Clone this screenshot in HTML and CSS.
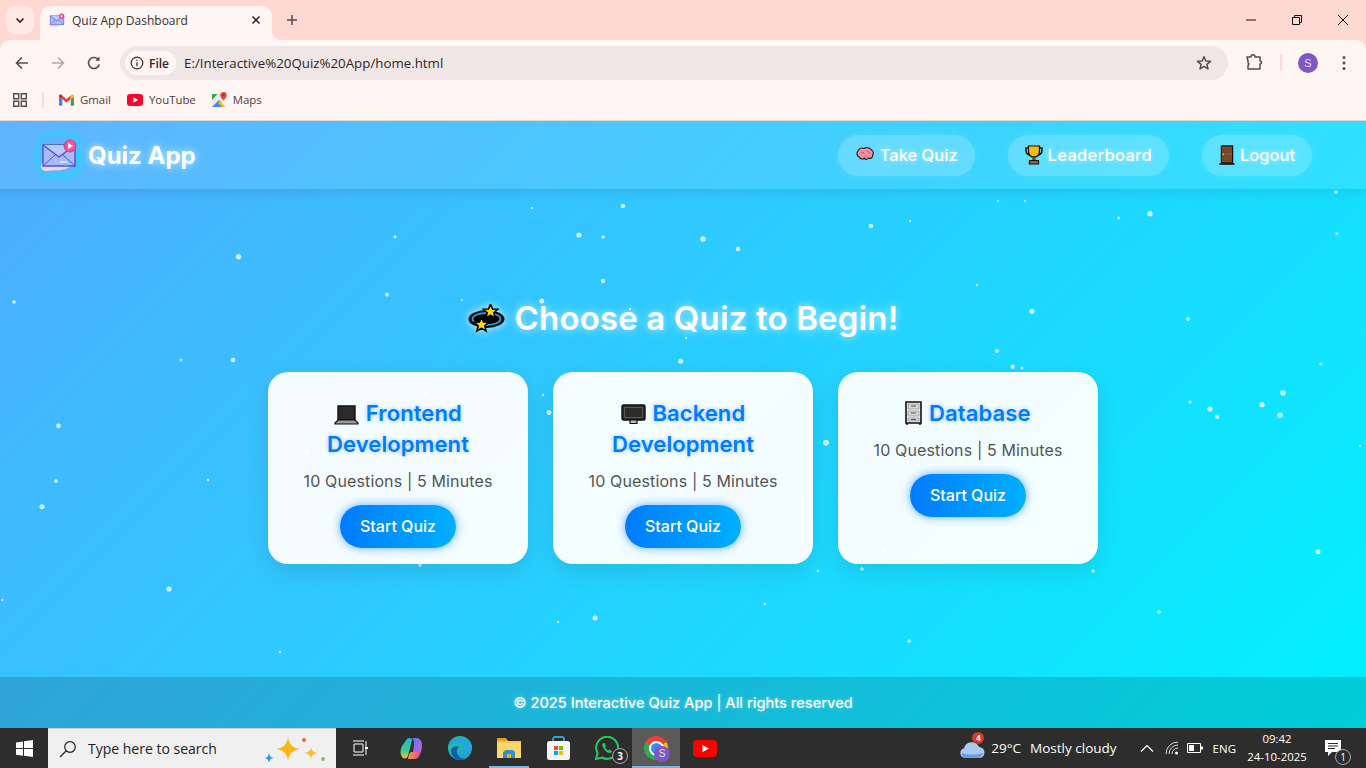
FILE: index.html
```html
<!DOCTYPE html>
<html>
<head>
<meta charset="utf-8">
<title>Quiz App Dashboard</title>
<link rel="stylesheet" href="styles.css">
</head>
<body>

<svg class="defs" width="0" height="0">
  <symbol id="mail" viewBox="0 0 38 38">
    <path d="M2 27c-3 4 0 9 6 8 4-1 9 0 13-1 7-1 12-4 13-9 1-4 0-8-2-8z" fill="#f1d3e6"/>
    <path d="M3 9h32v21H3z" fill="#a8b9ff" stroke="#4a55c8" stroke-width="1.4" stroke-linejoin="round"/>
    <path d="M3 9l16 12L35 9" fill="#bcc9ff" stroke="#4a55c8" stroke-width="1.4" stroke-linejoin="round"/>
    <path d="M3 30l12-11M35 30L23 19" fill="none" stroke="#4a55c8" stroke-width="1"/>
    <path d="M20 26h7" stroke="#fff" stroke-width="1.2"/>
    <circle cx="30" cy="10" r="6" fill="#f2559b" stroke="#c93a80" stroke-width="1"/>
    <path d="M28 7l5 3-5 3z" fill="#fff"/>
    <circle cx="26" cy="29" r="1.3" fill="#2fd6a0"/>
    <circle cx="16" cy="35" r="1" fill="#2fd6a0"/>
    <circle cx="21" cy="5" r="1" fill="#b58ad8"/>
  </symbol>
  <symbol id="star" viewBox="-7 -7 14 14">
    <polygon points="0,-6 1.7,-2 6,-1.8 2.7,1 3.8,5.4 0,3 -3.8,5.4 -2.7,1 -6,-1.8 -1.7,-2" fill="#ffdd00" stroke="#000" stroke-width="1.3"/>
  </symbol>
</svg>

<div class="tabstrip">
  <div class="tab-search">
    <svg width="12" height="12" viewBox="0 0 12 12"><path d="M2.5 4.500L6 8l3.500-3.500" fill="none" stroke="#222" stroke-width="1.6"/></svg>
  </div>
  <div class="tab">
    <svg class="tab-favicon" width="16" height="16"><use href="#mail"/></svg>
    <span class="tab-title">Quiz App Dashboard</span>
    <svg class="tab-close" width="10" height="10" viewBox="0 0 10 10"><path d="M1.5 1.500l7 7M8.500 1.500l-7 7" stroke="#222" stroke-width="1.5"/></svg>
  </div>
  <div class="new-tab">
    <svg width="12" height="12" viewBox="0 0 12 12"><path d="M6 1v10M1 6h10" stroke="#5b4a47" stroke-width="1.5"/></svg>
  </div>
  <div class="window-controls">
    <div class="win-btn"><svg width="10" height="10" viewBox="0 0 10 10"><path d="M0 5h10" stroke="#111" stroke-width="1"/></svg></div>
    <div class="win-btn"><svg width="10" height="10" viewBox="0 0 10 10"><path d="M.5 2.500h7v7h-7zM2.500 2.500v-2h7v7h-2" fill="none" stroke="#111" stroke-width="1"/></svg></div>
    <div class="win-btn"><svg width="10" height="10" viewBox="0 0 10 10"><path d="M0 0l10 10M10 0L0 10" stroke="#111" stroke-width="1"/></svg></div>
  </div>
</div>

<div class="toolbar">
  <div class="tool-btn"><svg width="16" height="16" viewBox="0 0 16 16"><path d="M14 8H2.500M8 2.500L2.500 8 8 13.500" fill="none" stroke="#5b4a47" stroke-width="1.6"/></svg></div>
  <div class="tool-btn"><svg width="16" height="16" viewBox="0 0 16 16"><path d="M2 8h11.500M8 2.500L13.500 8 8 13.500" fill="none" stroke="#b3a6a4" stroke-width="1.6"/></svg></div>
  <div class="tool-btn"><svg width="16" height="16" viewBox="0 0 16 16"><path d="M13.300 9.500A5.500 5.500 0 1 1 12 4.200" fill="none" stroke="#5b4a47" stroke-width="1.6"/><path d="M13.500 1.500v4.200H9.300z" fill="#5b4a47"/></svg></div>
  <div class="omnibox">
    <div class="site-chip">
      <svg width="14" height="14" viewBox="0 0 14 14"><circle cx="7" cy="7" r="5.800" fill="none" stroke="#3c2f2d" stroke-width="1.2"/><path d="M7 6.200v4M7 3.800v1.300" stroke="#3c2f2d" stroke-width="1.3"/></svg>
      <span>File</span>
    </div>
    <span class="url">E:/Interactive%20Quiz%20App/home.html</span>
    <svg class="bookmark-star" width="16" height="16" viewBox="0 0 16 16"><polygon points="8,1.8 9.8,6 14.5,6.3 10.9,9.3 12,13.9 8,11.4 4,13.9 5.1,9.3 1.5,6.3 6.2,6" fill="none" stroke="#5b4a47" stroke-width="1.5" stroke-linejoin="round"/></svg>
  </div>
  <div class="tool-btn ext"><svg width="18" height="18" viewBox="0 0 18 18"><path d="M2 3h4c0-3 4-3 4 0h5v4c2 0 2 3 0 3v5H3v-3.500l1-1.500-1-1.500V7z" fill="none" stroke="#5b4a47" stroke-width="1.5" stroke-linejoin="round"/></svg></div>
  <div class="tool-sep"></div>
  <div class="tool-btn"><div class="avatar">S</div></div>
  <div class="tool-btn"><svg width="4" height="16" viewBox="0 0 4 16"><circle cx="2" cy="2.500" r="1.500" fill="#5b4a47"/><circle cx="2" cy="8" r="1.500" fill="#5b4a47"/><circle cx="2" cy="13.500" r="1.500" fill="#5b4a47"/></svg></div>
</div>

<div class="bookmarks">
  <svg class="apps-icon" width="14" height="14" viewBox="0 0 14 14"><path d="M.7.700h5v5h-5zM8.300.700h5v5h-5zM.7 8.300h5v5h-5zM8.300 8.300h5v5h-5z" fill="none" stroke="#5b4a47" stroke-width="1.4"/></svg>
  <div class="bm-sep"></div>
  <div class="bm-item">
    <svg width="15" height="12" viewBox="0 0 16 12"><path d="M0 2.500V11a1 1 0 0 0 1 1h2.500V5.200z" fill="#4285f4"/><path d="M16 2.500V11a1 1 0 0 1-1 1h-2.500V5.200z" fill="#34a853"/><path d="M3.500 5.200L8 8.600l4.500-3.400V1.300L8 4.800 3.500 1.300z" fill="#ea4335"/><path d="M12.500 1.300l1-.8c1-.8 2.500 0 2.500 1.400v.6l-3.500 2.700z" fill="#fbbc04"/><path d="M3.500 1.300l-1-.8C1.500-.3 0 .5 0 1.900v.6l3.500 2.700z" fill="#c5221f"/></svg>
    <span>Gmail</span>
  </div>
  <div class="bm-item">
    <svg width="16" height="12" viewBox="0 0 16 12"><rect width="16" height="12" rx="3" fill="#ff0033"/><path d="M6.300 3.300L11 6l-4.700 2.700z" fill="#fff"/></svg>
    <span>YouTube</span>
  </div>
  <div class="bm-item">
    <svg width="15" height="15" viewBox="0 0 15 15"><path d="M0 2h10v13H0z" fill="#e8eaed"/><path d="M0 2h5.500L0 8z" fill="#34a853"/><path d="M0 15l7-7 6 7z" fill="#4285f4"/><path d="M8 9l5 6h-3l-4-4z" fill="#fbbc04"/><path d="M11.500 0a3.200 3.200 0 0 1 3.200 3.200c0 2.300-3.200 5.300-3.200 5.300S8.300 5.500 8.300 3.200A3.200 3.200 0 0 1 11.500 0z" fill="#ea4335"/><circle cx="11.500" cy="3.200" r="1.1" fill="#a52714"/></svg>
    <span>Maps</span>
  </div>
</div>

<div class="page">
  <!-- floating dots -->
  <svg class="particles" width="1366" height="607" viewBox="0 121 1366 607">
    <g fill="#fff" fill-opacity=".75">
      <circle cx="238.6" cy="256.7" r="2.7"/><circle cx="395" cy="236.7" r="1.5"/><circle cx="387" cy="294.5" r="2"/>
      <circle cx="14" cy="302" r="1.8"/><circle cx="233" cy="360" r="2.3"/><circle cx="181" cy="360" r="1.5"/>
      <circle cx="58.5" cy="426" r="2.4"/><circle cx="56" cy="481" r="1.9"/><circle cx="42" cy="506.7" r="2.5"/>
      <circle cx="208" cy="480" r="1.3"/><circle cx="2.3" cy="600" r="1.2"/><circle cx="169" cy="589" r="2.6"/>
      <circle cx="1025" cy="201" r="1.1"/><circle cx="1118.7" cy="218" r="1.5"/><circle cx="1150" cy="213.7" r="2.7"/>
      <circle cx="1336" cy="192" r="1.8"/><circle cx="1337" cy="233.7" r="1.5"/><circle cx="1032" cy="311.3" r="2.6"/>
      <circle cx="1188" cy="319" r="2"/><circle cx="1012.7" cy="366.7" r="2.2"/><circle cx="1321" cy="364" r="1.6"/>
      <circle cx="1283" cy="393" r="2.8"/><circle cx="1190" cy="402" r="1.6"/><circle cx="1210" cy="409" r="2.6"/>
      <circle cx="1217" cy="416.7" r="2.2"/><circle cx="1262" cy="404.7" r="2.6"/><circle cx="1280" cy="415.3" r="2.8"/>
      <circle cx="1360" cy="446" r="1.1"/><circle cx="1318" cy="551.7" r="2.5"/><circle cx="1093" cy="571" r="1.8"/>
      <circle cx="1159" cy="612" r="1.8"/><circle cx="532" cy="208" r="1.2"/><circle cx="623" cy="206" r="2.2"/>
      <circle cx="579" cy="235" r="2.6"/><circle cx="603" cy="237" r="1.8"/><circle cx="703" cy="239" r="2.7"/>
      <circle cx="738" cy="249" r="2.3"/><circle cx="603" cy="281" r="2.2"/><circle cx="630" cy="309" r="1.2"/>
      <circle cx="871" cy="226" r="2.3"/><circle cx="910" cy="221" r="1.2"/><circle cx="998" cy="201" r="1.1"/>
      <circle cx="977" cy="285" r="1.2"/><circle cx="997" cy="351" r="2"/><circle cx="462" cy="300" r="1"/>
      <circle cx="541.7" cy="301" r="2.5"/><circle cx="680.7" cy="361.3" r="2.5"/><circle cx="543" cy="395" r="1.2"/>
      <circle cx="549" cy="412.6" r="2.5"/><circle cx="420" cy="565" r="1.7"/><circle cx="826" cy="442.7" r="3"/>
      <circle cx="862" cy="569" r="1.7"/><circle cx="595" cy="618" r="2.5"/><circle cx="558" cy="622" r="1.2"/>
      <circle cx="765" cy="604" r="1.3"/><circle cx="818" cy="571" r="1.2"/><circle cx="909" cy="641" r="1.8"/>
      <circle cx="280" cy="652" r="1.2"/><circle cx="425" cy="394" r="2.5"/><circle cx="307" cy="452" r="3"/>
      <circle cx="854" cy="411" r="2.5"/><circle cx="884" cy="551" r="2.5"/><circle cx="730" cy="384" r="2.5"/>
      <circle cx="1022" cy="368" r="1.5"/><circle cx="686" cy="338" r="1.2"/>
    </g>
  </svg>

  <header class="navbar">
    <div class="brand">
      <svg class="brand-icon" width="38" height="38"><use href="#mail"/></svg>
      <span class="brand-name">Quiz App</span>
    </div>
    <nav class="nav-links">
      <a class="nav-link">
        <svg width="20" height="20" viewBox="0 0 20 20"><path d="M3 6c1-3 4-3.500 6-2.500 2-1.500 6-1 7.500 1.500 2 1 2.500 4 1 5.500.5 2-2 3.500-4 2.500-1 1.500-3 1.500-4 .5-2 1-4.500.5-5-1.500C2 11.500 1 8 3 6z" fill="#f48fa6" stroke="#222" stroke-width="1.2"/><path d="M6 8c2-1 3 0 3.500 1M12 6c1 1 3 1 3 3M9 13c0-1 1-2 3-2" fill="none" stroke="#b8526c" stroke-width="1"/></svg>
        Take Quiz
      </a>
      <a class="nav-link wide-text">
        <svg width="18" height="20" viewBox="0 0 18 20"><path d="M4 3H1v2c0 3 2 5 5 5M14 3h3v2c0 3-2 5-5 5" fill="none" stroke="#111" stroke-width="1.5"/><path d="M3.500 1h11v5c0 4-2.500 6-5.500 6S3.500 10 3.500 6z" fill="#fdb813" stroke="#111" stroke-width="1.2"/><path d="M8 12h2v3H8z" fill="#c98a0a" stroke="#111" stroke-width=".8"/><path d="M4.500 15.500h9v3.500h-9z" fill="#a5622a" stroke="#111" stroke-width="1.2"/></svg>
        Leaderboard
      </a>
      <a class="nav-link">
        <svg width="16" height="20" viewBox="0 0 16 20"><path d="M2.500 1h11v17h-11z" fill="#96603c" stroke="#111" stroke-width="1.4"/><path d="M4.500 3h7v5h-7zM4.500 10h7v6h-7z" fill="#7b4a2a" stroke="#5a3418" stroke-width=".6"/><circle cx="4.200" cy="9.300" r=".9" fill="#f3c23c"/><path d="M.5 19h15" stroke="#111" stroke-width="1.6"/></svg>
        Logout
      </a>
    </nav>
  </header>

  <main class="main">
    <h1 class="heading">
      <svg class="heading-icon" width="37" height="29" viewBox="0 0 37 29">
        <ellipse cx="18.5" cy="15" rx="18" ry="9" fill="#000"/>
        <ellipse cx="18.5" cy="15" rx="14" ry="6" fill="#000" stroke="#1fa4dc" stroke-width="1.8"/>
        <use href="#star" x="14" y="-1" width="17" height="17"/>
        <use href="#star" x="5" y="12" width="17" height="17"/>
      </svg>
      <span>Choose a Quiz to Begin!</span>
    </h1>
    <div class="cards">
      <div class="card">
        <h2 class="card-title">
          <svg class="title-icon" width="25" height="21" viewBox="0 0 25 21"><path d="M4 2h17v14H4z" fill="#2b2b2b" stroke="#111" stroke-width="1.4"/><path d="M1 19l3-3h17l3 3v1H1z" fill="#9a9a9a" stroke="#111" stroke-width="1.2"/></svg>
          Frontend Development
        </h2>
        <p class="card-meta">10 Questions | 5 Minutes</p>
        <button class="start-btn">Start Quiz</button>
      </div>
      <div class="card">
        <h2 class="card-title">
          <svg class="title-icon" width="25" height="21" viewBox="0 0 25 21"><rect x="1" y="1" width="23" height="15" rx="1.5" fill="#2b2b2b" stroke="#111" stroke-width="1.4"/><path d="M3.500 3.500h18v10h-18z" fill="none" stroke="#666" stroke-width=".8"/><path d="M9 16h7v3.500H9z" fill="#bbb" stroke="#111" stroke-width="1.2"/></svg>
          Backend Development
        </h2>
        <p class="card-meta">10 Questions | 5 Minutes</p>
        <button class="start-btn">Start Quiz</button>
      </div>
      <div class="card">
        <h2 class="card-title">
          <svg class="title-icon" width="17" height="24" viewBox="0 0 17 24"><path d="M1 1h15v21H1z" fill="#eee" stroke="#111" stroke-width="1.6"/><path d="M3 3h11v5H3zM3 10h11v5H3zM3 17h11v3H3z" fill="#d5d5d5" stroke="#888" stroke-width=".6"/><path d="M6 5h5M6 12h5M6 18.500h5" stroke="#555" stroke-width="1"/><path d="M2 22v2M15 22v2" stroke="#111" stroke-width="1.5"/></svg>
          Database
        </h2>
        <p class="card-meta">10 Questions | 5 Minutes</p>
        <button class="start-btn">Start Quiz</button>
      </div>
    </div>
  </main>

  <footer class="footer">© 2025 Interactive Quiz App | All rights reserved</footer>
</div>

<div class="taskbar">
  <div class="start-btn-win">
    <svg width="17" height="17" viewBox="0 0 17 17"><path d="M0 2.400l7-1v6.700H0zM8 1.200L17 0v8.100H8zM0 9h7v6.700l-7-1zM8 9h9v8l-9-1.200z" fill="#fff"/></svg>
  </div>
  <div class="search">
    <svg width="18" height="18" viewBox="0 0 18 18"><circle cx="11" cy="7" r="5.300" fill="none" stroke="#222" stroke-width="1.2"/><path d="M7 11l-6 6" stroke="#222" stroke-width="1.3"/></svg>
    <span class="search-text">Type here to search</span>
    <svg class="search-art" width="66" height="28" viewBox="0 0 66 28">
      <path d="M26 2c1 8 5 11 12 12-7 1-11 4-12 12-1-8-5-11-12-12 7-1 11-4 12-12z" fill="#fbb614"/>
      <path d="M49 12c.5 3.500 2 5 6 6-4 1-5.500 2.500-6 6-.5-3.500-2-5-6-6 4-1 5.500-2.500 6-6z" fill="#fbc02d"/>
      <path d="M7 18c.5 3 1.500 4.500 4.500 5-3 .5-4 2-4.500 5-.5-3-1.500-4.500-4.500-5 3-.5 4-2 4.500-5z" fill="#1e9be8"/>
      <circle cx="42" cy="5" r="2" fill="#e8643a"/><circle cx="61" cy="24" r="2" fill="#8bc34a"/>
    </svg>
  </div>
  <div class="task-icons">
    <div class="task-item task-view">
      <svg width="16" height="16" viewBox="0 0 16 16"><path d="M1 1h11M1 15h11M2 4h9v8H2zM14 1v14" fill="none" stroke="#fff" stroke-width="1"/><path d="M13 7h3v2h-3z" fill="#fff"/></svg>
    </div>
    <div class="task-item">
      <svg width="23" height="23" viewBox="0 0 23 23"><defs><linearGradient id="cpA" x1="0" y1="0" x2="0" y2="1"><stop offset="0" stop-color="#22b8e0"/><stop offset=".6" stop-color="#3cc890"/><stop offset="1" stop-color="#e8c830"/></linearGradient><linearGradient id="cpB" x1="0" y1="0" x2="1" y2="1"><stop offset="0" stop-color="#4f7cf0"/><stop offset="1" stop-color="#d85ae0"/></linearGradient><linearGradient id="cpC" x1="0" y1="0" x2="1" y2="0"><stop offset="0" stop-color="#f0a040"/><stop offset="1" stop-color="#e8488c"/></linearGradient></defs><path d="M7 2c2-2 5-1 5 1L8 19c-1 3-5 3-6 1-2-3-2-7 0-11z" fill="url(#cpA)"/><path d="M11 1h5c3 0 6 2 6 7 0 4-1 8-3 11l-6-4 1-8c0-3-1-6-3-6z" fill="url(#cpB)"/><path d="M8 22h7c2 0 3-1 4-3l1-4h-8c-2 0-3 1-4 7z" fill="url(#cpC)"/></svg>
    </div>
    <div class="task-item">
      <svg width="24" height="24" viewBox="0 0 24 24"><defs><linearGradient id="edgeA" x1="0" y1="0" x2="1" y2="1"><stop offset="0" stop-color="#2bc88a"/><stop offset="1" stop-color="#1b9de2"/></linearGradient></defs><circle cx="12" cy="12" r="12" fill="url(#edgeA)"/><path d="M0 13C0 5 6 1 12 1c6 0 12 5 12 11 0 3-3 4-6 4-2 0-3-1-3-2 1-1 2-2 1-4-1-3-4-4-7-3C4 8 1 10 0 13z" fill="#1fa8d8"/><path d="M3 14c1-3 5-5 8-3-2 2-3 5-1 8 1 2 4 4 7 3.500-2 1-3.500 1.500-5 1.500C7 24 3 20 3 14z" fill="#0f5fae"/></svg>
    </div>
    <div class="task-item task-open">
      <svg width="24" height="22" viewBox="0 0 24 22"><path d="M0 2h9l2 2h13v17H0z" fill="#f7c948"/><path d="M0 1h9l2 3H0z" fill="#d9a22a"/><path d="M0 6h24v15H0z" fill="#fbd66a"/><path d="M6 21v-6l3-2h7l2 2v6h-4v-4h-4v4z" fill="#2d8fd5"/><path d="M10 17h4v4h-4z" fill="#e8b030"/></svg>
    </div>
    <div class="task-item">
      <svg width="23" height="24" viewBox="0 0 23 24"><path d="M6 6V3a2 2 0 0 1 2-2h7a2 2 0 0 1 2 2v3" fill="none" stroke="#23a8e0" stroke-width="1.8"/><rect y="5" width="23" height="19" rx="2.5" fill="#f6f6f6"/><path d="M7 10h4v4H7z" fill="#f25022"/><path d="M12 10h4v4h-4z" fill="#7fba00"/><path d="M7 15h4v4H7z" fill="#00a4ef"/><path d="M12 15h4v4h-4z" fill="#ffb900"/></svg>
    </div>
    <div class="task-item">
      <svg width="24" height="24" viewBox="0 0 24 24"><path d="M1 23l1.600-5.800A11 11 0 1 1 7 21.500z" fill="none" stroke="#25c95e" stroke-width="2"/><path d="M8 7c-1 1-1 3 1 6s4.500 4 6 4c1 0 2-1 2-2l-2.500-1.500-1 1c-1.500-.5-3-2-3.500-3.500l1-1L9.500 7z" fill="#25c95e"/></svg>
      <span class="count-badge whatsapp-count">3</span>
    </div>
    <div class="task-item task-active">
      <div class="chrome-logo"><div class="chrome-centre"></div></div>
      <div class="chrome-avatar">S</div>
    </div>
    <div class="task-item">
      <svg width="24" height="17" viewBox="0 0 24 17"><rect width="24" height="17" rx="4" fill="#f00"/><path d="M9.500 5l6.500 3.500L9.500 12z" fill="#fff"/></svg>
    </div>
  </div>
  <div class="weather">
    <div class="weather-icon">
      <svg width="26" height="22" viewBox="0 0 26 22"><path d="M6 21a5 5 0 0 1-1-9.800A8 8 0 0 1 20 10a5.500 5.500 0 0 1 0 11z" fill="#a9c9f2"/><path d="M3 16c5 2 14 2 21 0-1 3-3 5-5 5H6c-2 0-3-2-3-5z" fill="#6a9ce0"/></svg>
      <span class="weather-badge">4</span>
    </div>
    <span class="temp">29°C</span>
    <span class="weather-text">Mostly cloudy</span>
  </div>
  <div class="tray">
    <svg class="tray-chevron" width="14" height="8" viewBox="0 0 14 8"><path d="M1 7.500l6-6 6 6" fill="none" stroke="#fff" stroke-width="1.2"/></svg>
    <svg class="tray-wifi" width="14" height="14" viewBox="0 0 14 14"><path d="M1 13A12 12 0 0 1 13 1M4 13a9 9 0 0 1 9-9M7 13a6 6 0 0 1 6-6" fill="none" stroke="#ddd" stroke-width="1"/><circle cx="11.5" cy="12" r="1.5" fill="#fff"/></svg>
    <svg class="tray-battery" width="16" height="10" viewBox="0 0 16 10"><path d="M.5.500h13v9H.5z" fill="none" stroke="#fff" stroke-width="1"/><path d="M2 2h5v6H2z" fill="#fff"/><path d="M14 3.500h2v3h-2z" fill="#fff"/></svg>
    <span class="lang">ENG</span>
    <div class="clock"><span>09:42</span><span>24-10-2025</span></div>
    <div class="notify">
      <svg width="18" height="18" viewBox="0 0 18 18"><path d="M1 1h16v12H8l-4 4v-4H1z" fill="#fff"/><path d="M4 4.500h10M4 7h10M4 9.500h7" stroke="#2d2d2d" stroke-width="1"/></svg>
      <span class="count-badge notify-count">1</span>
    </div>
  </div>
</div>

</body>
</html>
```

FILE: styles.css
```css
html, body { margin: 0; padding: 0; }

body
{
    width: 1366px;
    height: 768px;
    overflow: hidden;
    display: flex;
    flex-direction: column;
    font-family: "Open Sans", "Noto Sans", sans-serif;
    background: #ffd8d2;
}

.defs { position: absolute; }

/* browser frame */
.tabstrip
{
    height: 40px;
    flex: none;
    display: flex;
    padding-left: 6px;
    background: #ffd8d2;
}

.tab-search
{
    width: 28px;
    height: 28px;
    margin-top: 6px;
    margin-right: 6px;
    border-radius: 8px;
    background: #ffe8e4;
    display: flex;
    align-items: center;
    justify-content: center;
}

.tab
{
    width: 232px;
    height: 34px;
    margin-top: 6px;
    box-sizing: border-box;
    padding: 0 0 6px 9px;
    border-radius: 10px 10px 0 0;
    background: #fff6f4;
    display: flex;
    align-items: center;
    position: relative;
}

.tab::after
{
    content: "";
    position: absolute;
    right: -10px;
    bottom: 0;
    width: 10px;
    height: 10px;
    background: radial-gradient(circle at 100% 0, transparent 10px, #fff6f4 10.5px);
}

.tab-title
{
    margin-left: 7px;
    font-size: 12px;
    color: #3a2f2e;
    white-space: nowrap;
}

.tab-close { margin-left: auto; margin-right: 11px; }

.new-tab
{
    width: 28px;
    height: 28px;
    margin: 6px 0 0 6px;
    display: flex;
    align-items: center;
    justify-content: center;
}

.window-controls { display: flex; margin-left: auto; }

.win-btn
{
    width: 46px;
    height: 40px;
    display: flex;
    align-items: center;
    justify-content: center;
}

.toolbar
{
    height: 46px;
    flex: none;
    box-sizing: border-box;
    padding: 0 4px;
    display: flex;
    align-items: flex-start;
    background: #fff6f4;
    border-radius: 10px 10px 0 0;
}

.tool-btn
{
    width: 36px;
    height: 34px;
    margin-top: 6px;
    flex: none;
    display: flex;
    align-items: center;
    justify-content: center;
}

.tool-btn.ext { margin-left: 8px; }

.omnibox
{
    flex: 1;
    height: 34px;
    margin: 6px 0 0 8px;
    padding: 0 16px 0 5px;
    box-sizing: border-box;
    border-radius: 17px;
    background: #f1e6e6;
    display: flex;
    align-items: center;
}

.site-chip
{
    width: 51px;
    height: 24px;
    flex: none;
    box-sizing: border-box;
    padding-left: 5px;
    border-radius: 12px;
    background: #fff6f4;
    display: flex;
    align-items: center;
    gap: 5px;
    font-size: 12px;
    font-weight: 600;
    color: #2e2524;
}

.url
{
    margin-left: 8px;
    font-size: 13.3px;
    color: #2e2524;
}

.bookmark-star { margin-left: auto; }

.tool-sep
{
    width: 2px;
    height: 16px;
    margin: 15px 8px 0;
    flex: none;
    background: #ffd8d2;
}

.avatar
{
    width: 20px;
    height: 20px;
    border-radius: 50%;
    background: #7e57c2;
    color: #e8def8;
    font: 11px/20px "Liberation Sans", sans-serif;
    text-align: center;
}

.bookmarks
{
    height: 35px;
    flex: none;
    box-sizing: border-box;
    padding: 0 0 7px 13px;
    display: flex;
    align-items: center;
    background: #fff6f4;
    border-bottom: 1px solid #e6d5d0;
    font-size: 11.4px;
    color: #4c403e;
}

.apps-icon { margin-right: 15px; flex: none; }

.bm-sep
{
    width: 2px;
    height: 16px;
    margin-right: 15px;
    background: #ffd8d2;
}

.bm-item
{
    display: flex;
    align-items: center;
    gap: 6px;
    margin-right: 16px;
}

/* quiz page */
.page
{
    flex: 1;
    position: relative;
    display: flex;
    flex-direction: column;
    background: linear-gradient(135deg, #4facfe, #00f2fe);
    font-family: Inter, sans-serif;
    color: #fff;
    overflow: hidden;
}

.particles { position: absolute; left: 0; top: 0; }

.navbar
{
    height: 68px;
    flex: none;
    position: relative;
    box-sizing: border-box;
    padding: 0 54px 0 40px;
    display: flex;
    align-items: center;
    justify-content: space-between;
    background: rgba(255, 255, 255, 0.1);
    box-shadow: 0 4px 10px rgba(0, 0, 0, 0.08);
}

.brand { display: flex; align-items: center; gap: 10px; }

.brand-icon
{
    border-radius: 10px;
    background: rgba(0, 200, 255, 0.08);
    box-shadow: 0 0 8px 1px rgba(0, 229, 255, 0.9);
}

.brand-name
{
    font-size: 24px;
    font-weight: 700;
    text-shadow: 0 0 8px rgba(255, 255, 255, 0.7);
}

.nav-links { display: flex; gap: 33px; }

.nav-link
{
    height: 41px;
    box-sizing: border-box;
    padding: 0 17px;
    display: flex;
    align-items: center;
    gap: 5px;
    border-radius: 21px;
    background: rgba(255, 255, 255, 0.2);
    box-shadow: 0 0 6px rgba(255, 255, 255, 0.12);
    font-size: 16.5px;
    font-weight: 500;
    text-shadow: 0 0 5px rgba(255, 255, 255, 0.5);
}

.wide-text { letter-spacing: 0.3px; }

.main
{
    flex: 1;
    position: relative;
    display: flex;
    flex-direction: column;
    align-items: center;
    justify-content: center;
}

.heading
{
    margin: 0 0 38px;
    display: flex;
    align-items: center;
    gap: 10px;
    font-size: 33px;
    line-height: 32px;
    font-weight: 600;
    letter-spacing: 0.15px;
    text-shadow: 0 0 10px rgba(255, 255, 255, 0.7);
}

.heading-icon { filter: drop-shadow(0 0 4px rgba(255, 255, 255, 0.8)); }

.cards { display: flex; gap: 25px; }

.card
{
    width: 260px;
    height: 192px;
    box-sizing: border-box;
    padding: 26px 25px 25px;
    border-radius: 20px;
    background: rgba(255, 255, 255, 0.95);
    box-shadow: 0 8px 25px rgba(0, 0, 0, 0.1);
    text-align: center;
}

.card-title
{
    margin: 0;
    font-size: 22px;
    line-height: 31px;
    font-weight: 600;
    letter-spacing: 0.1px;
    color: #007bff;
    text-shadow: 0 0 4px rgba(0, 123, 255, 0.4);
}

.title-icon { vertical-align: -4px; margin-right: 1px; }

.card-meta
{
    margin: 9px 0 12px;
    font-size: 16px;
    line-height: 24px;
    letter-spacing: 0.13px;
    color: #555;
}

.start-btn
{
    width: 116px;
    height: 43px;
    padding: 0 0 2px;
    border: none;
    border-radius: 25px;
    background: linear-gradient(90deg, #007bff, #00b0ff);
    box-shadow: 0 0 10px rgba(0, 123, 255, 0.6);
    color: #fff;
    font: 500 16px Inter, sans-serif;
}

.footer
{
    height: 51px;
    flex: none;
    position: relative;
    display: flex;
    align-items: center;
    justify-content: center;
    background: rgba(0, 0, 0, 0.15);
    font-size: 14.6px;
    font-weight: 500;
    text-shadow: 0 0 4px rgba(255, 255, 255, 0.4);
}

/* windows taskbar */
.taskbar
{
    height: 40px;
    flex: none;
    display: flex;
    align-items: center;
    padding-right: 11px;
    background: #2d2d2d;
    color: #fff;
    font-size: 13.5px;
}

.start-btn-win
{
    width: 48px;
    height: 40px;
    flex: none;
    display: flex;
    align-items: center;
    justify-content: center;
}

.search
{
    width: 288px;
    height: 40px;
    flex: none;
    box-sizing: border-box;
    padding-left: 11px;
    display: flex;
    align-items: center;
    background: #f0f0f0;
    border-top: 1px solid #ccc;
    color: #222;
}

.search-text { margin-left: 11px; font-size: 14px; }

.search-art { margin-left: auto; margin-right: 8px; overflow: visible; }

.task-icons { display: flex; margin-left: 1px; }

.task-item
{
    width: 48px;
    height: 40px;
    margin-left: 1px;
    box-sizing: border-box;
    position: relative;
    display: flex;
    align-items: center;
    justify-content: center;
}

.task-view { padding-right: 4px; }

.task-open::after
{
    content: "";
    position: absolute;
    left: 4px;
    right: 4px;
    bottom: 0;
    height: 2px;
    background: #78b6e6;
}

.task-active
{
    background: #5a5a5a;
    box-shadow: inset 0 -2px 0 #78b6e6;
}

.count-badge
{
    position: absolute;
    width: 14px;
    height: 14px;
    border: 1.5px solid #aaa;
    border-radius: 50%;
    background: #2d2d2d;
    font: 700 10px/14px "Open Sans", sans-serif;
    text-align: center;
}

.whatsapp-count { right: 3px; bottom: 4px; }

.chrome-logo
{
    width: 24px;
    height: 24px;
    border-radius: 50%;
    background: conic-gradient(from -60deg, #ea4335 0 120deg, #fbbc04 120deg 240deg, #34a853 240deg 360deg);
    display: flex;
    align-items: center;
    justify-content: center;
}

.chrome-centre
{
    width: 11px;
    height: 11px;
    border: 2px solid #fff;
    border-radius: 50%;
    background: #4285f4;
}

.chrome-avatar
{
    position: absolute;
    right: 10px;
    bottom: 6px;
    width: 16px;
    height: 16px;
    border-radius: 50%;
    background: #7e57c2;
    color: #e8def8;
    font: 10px/16px "Liberation Sans", sans-serif;
    text-align: center;
}

.weather
{
    margin-left: auto;
    display: flex;
    align-items: center;
}

.weather-icon { position: relative; height: 22px; width: 26px; }

.weather-badge
{
    position: absolute;
    right: 1px;
    top: -5px;
    width: 12px;
    height: 12px;
    border-radius: 50%;
    background: #d23b2e;
    font: 700 8.5px/12px "Open Sans", sans-serif;
    text-align: center;
}

.temp { margin-left: 6px; }
.weather-text { margin-left: 9px; }

.tray
{
    display: flex;
    align-items: center;
    margin-left: 23px;
}

.tray-wifi { margin-left: 11px; }
.tray-battery { margin-left: 8px; }
.lang { margin-left: 10px; font-size: 11.5px; }

.clock
{
    width: 68px;
    margin-left: 7px;
    display: flex;
    flex-direction: column;
    align-items: center;
    font-size: 11.4px;
    line-height: 18px;
}

.notify
{
    width: 44px;
    height: 40px;
    position: relative;
    display: flex;
    align-items: center;
    justify-content: center;
}

.notify-count { right: 4px; bottom: 3px; font-weight: 400; }
```
